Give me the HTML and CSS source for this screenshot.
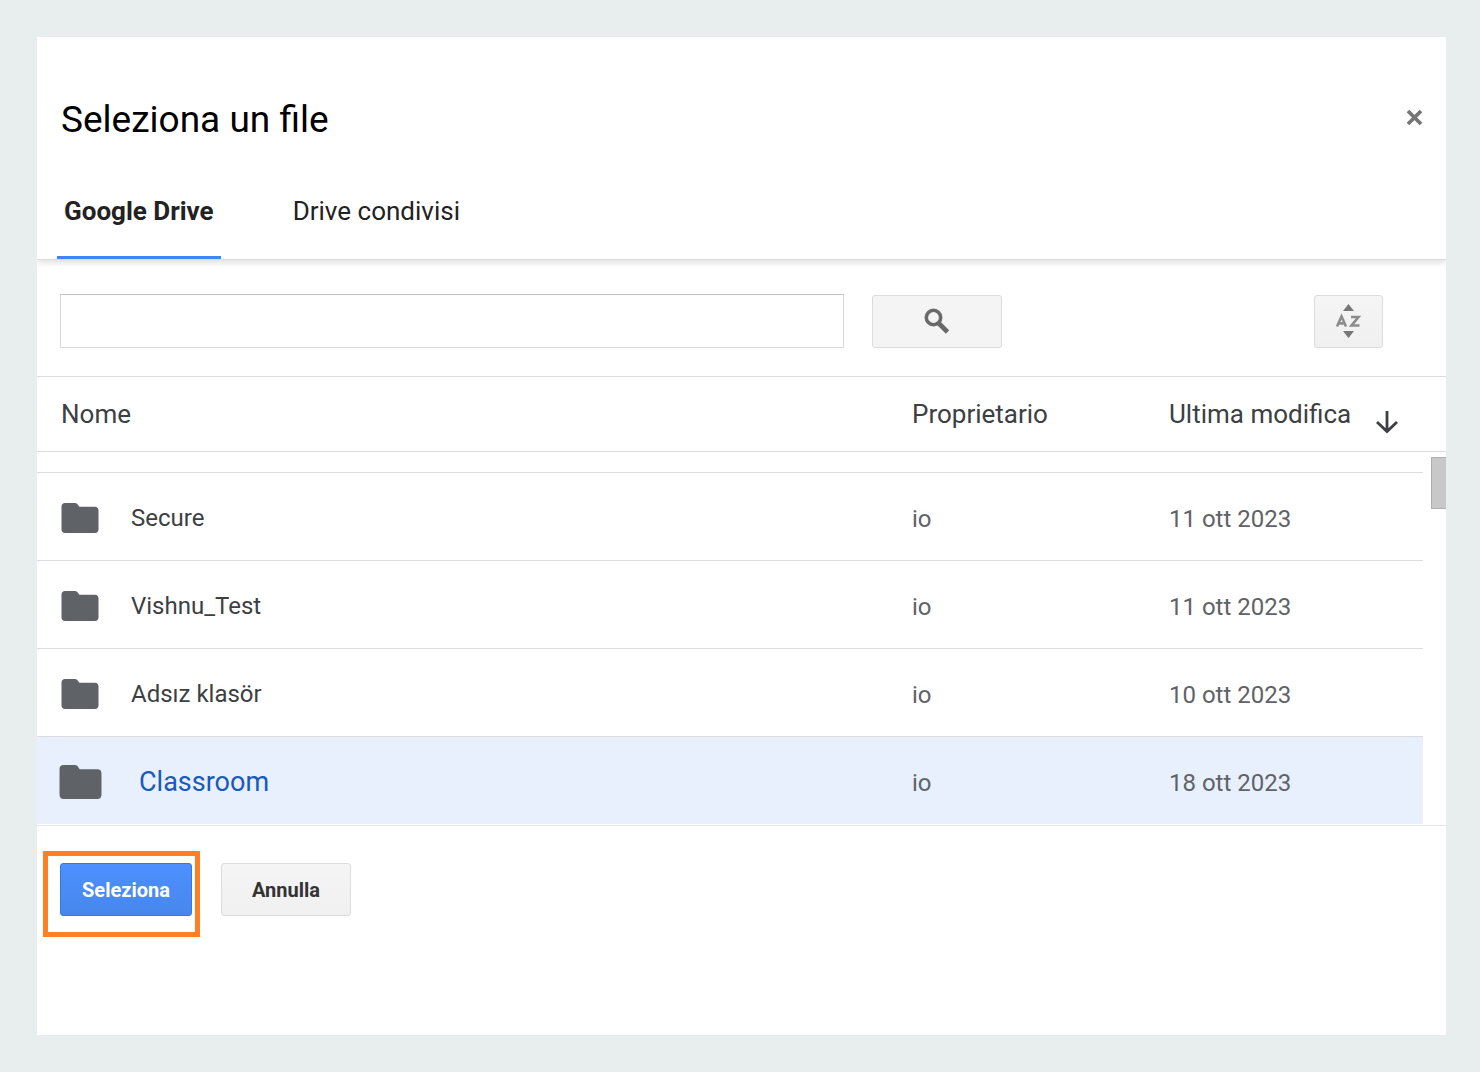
FILE: index.html
```html
<!DOCTYPE html>
<html lang="it">
<head>
<meta charset="utf-8">
<meta name="viewport" content="width=device-width, initial-scale=1">
<title>Seleziona un file</title>
<link rel="stylesheet" href="styles.css">
</head>
<body>
<svg class="sprite" aria-hidden="true">
  <symbol id="folder" viewBox="0 0 37 30">
    <path d="M3.5 0H13.5C15 0 15.8 .8 16.6 2L17.8 3.8H33.5C35.6 3.8 37 5.2 37 7.2V26.5C37 28.6 35.6 30 33.5 30H3.5C1.4 30 0 28.6 0 26.5V3.5C0 1.4 1.4 0 3.5 0Z" fill="#5f6368"/>
  </symbol>
</svg>
<main class="picker">
  <header class="picker-header">
    <div class="title-bar">
      <h1 class="title">Seleziona un file</h1>
      <button class="close" type="button" aria-label="Chiudi">
        <svg width="17" height="17" viewBox="0 0 17 17"><path d="M2 2L15 15M15 2L2 15" stroke="#757575" stroke-width="3.8" fill="none"/></svg>
      </button>
    </div>
    <nav class="tabs">
      <a class="tab tab-active" href="#drive">Google Drive</a>
      <a class="tab" href="#shared">Drive condivisi</a>
    </nav>
  </header>

  <form class="toolbar">
    <input class="search-box" type="text" aria-label="Cerca">
    <button class="btn btn-search" type="submit" aria-label="Avvia ricerca">
      <svg width="26" height="26" viewBox="0 0 26 26" fill="none" stroke="#696969"><circle cx="9.5" cy="9.5" r="7.2" stroke-width="3.6"/><path d="M15 15.5L23.5 24" stroke-width="4.6"/></svg>
    </button>
    <button class="btn btn-sort" type="button" aria-label="Ordina">
      <svg width="28" height="34" viewBox="0 0 28 34"><path d="M13.5 0L19 7H8ZM13.5 34L19 27H8Z" fill="#777"/><path d="M2 22.5L6.5 12.5L11 22.5M3.6 19.4H9.4M16 13H23.5L16.5 21.5H24.5" stroke="#8c8c8c" stroke-width="2.6" fill="none"/></svg>
    </button>
  </form>

  <div class="list">
    <table class="files">
      <colgroup><col><col class="col-owner"><col class="col-date"><col class="col-gutter"></colgroup>
      <thead>
        <tr>
          <th scope="col" class="name">Nome</th>
          <th scope="col">Proprietario</th>
          <th scope="col" colspan="2">
            <span class="sorted">Ultima modifica
              <svg width="24" height="24" viewBox="0 0 24 24"><path d="M12 1V21M2 12L12 21.5L22 12" stroke="#3c4043" stroke-width="2.8" fill="none"/></svg>
            </span>
          </th>
        </tr>
      </thead>
      <tbody>
        <tr class="partial"><td colspan="3"></td><td></td></tr>
        <tr>
          <td class="name"><span class="file"><svg class="folder"><use href="#folder"/></svg>Secure</span></td>
          <td>io</td><td>11 ott 2023</td><td></td>
        </tr>
        <tr>
          <td class="name"><span class="file"><svg class="folder"><use href="#folder"/></svg>Vishnu_Test</span></td>
          <td>io</td><td>11 ott 2023</td><td></td>
        </tr>
        <tr>
          <td class="name"><span class="file"><svg class="folder"><use href="#folder"/></svg>Adsız klasör</span></td>
          <td>io</td><td>10 ott 2023</td><td></td>
        </tr>
        <tr class="selected">
          <td class="name"><span class="file"><svg class="folder"><use href="#folder"/></svg>Classroom</span></td>
          <td>io</td><td>18 ott 2023</td><td></td>
        </tr>
      </tbody>
    </table>
    <div class="scroll-thumb"></div>
  </div>

  <footer class="actions">
    <div class="highlight"><button class="btn btn-primary" type="button">Seleziona</button></div>
    <button class="btn btn-cancel" type="button">Annulla</button>
  </footer>
</main>
</body>
</html>
```
FILE: styles.css
```css
* { box-sizing: border-box; }

body {
  margin: 0;
  padding: 37px 34px 37px 37px;
  background: #e8eeee;
  color: #3c4043;
  font-family: Roboto, "Liberation Sans", sans-serif;
  font-size: 24px;
}

.sprite { display: none; }

svg { display: block; flex: none; }

.picker {
  min-height: calc(100vh - 74px);
  overflow: clip;
  background: #fff;
}

/* Header */
.picker-header {
  padding: 61px 20px 0;
  border-bottom: 1px solid #dcdcdc;
  box-shadow: 0 3px 6px rgba(0, 0, 0, 0.12);
}

.title-bar {
  display: flex;
  align-items: center;
  justify-content: space-between;
  height: 44px;
  padding-left: 4px;
}

.title {
  margin: 0;
  color: #000;
  font-size: 37px;
  font-weight: 400;
  line-height: 44px;
}

.close {
  margin-bottom: 6px;
  padding: 3px;
  border: 0;
  background: none;
}

.tabs {
  display: flex;
  gap: 65px;
  padding-top: 24px;
}

.tab {
  height: 93px;
  padding: 0 7px;
  border-bottom: 3px solid transparent;
  color: #222;
  font-size: 26px;
  line-height: 90px;
  text-decoration: none;
}

.tab-active {
  border-color: #4285f4;
  font-weight: 700;
}

/* Search and sort */
.toolbar {
  display: grid;
  grid-template-columns: 20fr 130px 9fr;
  gap: 28px;
  align-items: center;
  height: 116px;
  padding: 6px 63px 0 23px;
}

.search-box {
  min-width: 0;
  height: 54px;
  padding: 0 12px;
  border: 1px solid #d9d9d9;
  border-top-color: #c0c0c0;
  font: inherit;
}

.btn {
  display: flex;
  align-items: center;
  justify-content: center;
  height: 53px;
  padding: 0;
  border: 1px solid #dcdcdc;
  border-radius: 3px;
  background: linear-gradient(#f5f5f5, #f0f0f0);
  color: #333;
  font-family: inherit;
  font-size: 20px;
  font-weight: 700;
}

.btn-search { background: #f4f4f4; }

.btn-sort {
  justify-self: end;
  width: 69px;
}

/* File list */
.list { position: relative; }

.files {
  width: 100%;
  table-layout: fixed;
  border-collapse: separate;
  border-spacing: 0;
}

.col-owner { width: 257px; }
.col-date { width: 254px; }
.col-gutter { width: 23px; }

th, td {
  padding: 0;
  text-align: left;
}

th {
  height: 76px;
  border: 1px solid #dadce0;
  border-width: 1px 0;
  font-size: 26px;
  font-weight: 400;
}

td {
  height: 88px;
  padding-top: 4px;
  border-bottom: 1px solid #dadce0;
  color: #5f6368;
}

.partial td {
  height: 21px;
  padding: 0;
}

.files td:last-child { border-bottom: 0; background: #fff; }

.files .name { padding-left: 24px; color: #3c4043; }

.files td.name { padding-top: 2px; }

.sorted {
  display: flex;
  align-items: center;
  gap: 24px;
}

.sorted svg { margin-top: 16px; }

.file {
  display: flex;
  align-items: center;
  gap: 32px;
}

.folder {
  width: 38px;
  height: 30px;
}

.selected td {
  border-bottom-color: #fff;
  background: #e8f0fe;
}

.files .selected .name {
  padding-left: 22px;
  color: #185abc;
  font-size: 27px;
}

.selected .file { gap: 37px; }

.selected .folder {
  width: 43px;
  height: 34px;
}

.scroll-thumb {
  position: absolute;
  top: 81px;
  right: 0;
  width: 15px;
  height: 52px;
  border: 1px solid #b0b0b0;
  border-right: 0;
  background: #c8c8c8;
}

/* Actions */
.actions {
  display: flex;
  gap: 29px;
  padding: 37px 23px;
  border-top: 1px solid #e4e6e8;
}

.highlight { position: relative; }

.highlight::after {
  content: "";
  position: absolute;
  inset: -12px -8px -21px -17px;
  border: 5px solid #ff7f27;
  pointer-events: none;
}

.btn-primary {
  width: 132px;
  border-color: #3079ed;
  background: linear-gradient(#4d90fe, #4787ed);
  color: #fff;
}

.btn-cancel { width: 130px; }
```
